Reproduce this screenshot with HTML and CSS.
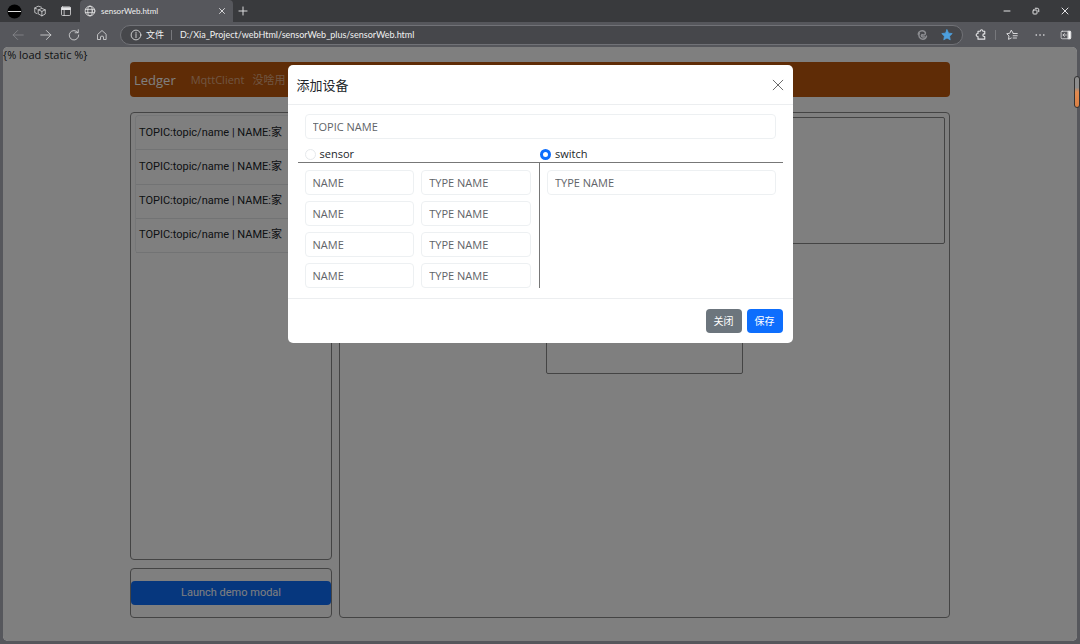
FILE: index.html
```html
<!DOCTYPE html>
<html lang="zh-CN">
<head>
<meta charset="utf-8">
<title>sensorWeb.html</title>
<link rel="stylesheet" href="styles.css">
</head>
<body>
<header class="tabbar">
  <div class="tab-tools">
    <svg class="avatar" viewBox="0 0 16 16"><circle cx="8" cy="8" r="7.5" fill="#000" stroke="none"/><path d="M1.500 8h13" stroke="#ddd" stroke-width="1.200"/></svg>
    <button class="icon-btn" aria-label="Workspaces"><svg viewBox="0 0 16 16"><path d="M6 6.500 10.500 4.500 15 6.500v5.500L10.500 14.500 6 12zM6 6.500l4.500 2 4.500-2M10.500 8.500v6M4 11.500 1 10V4l4.500-2.500L10 3M1 4l3 1.500"/></svg></button>
    <button class="icon-btn" aria-label="Tab actions"><svg viewBox="0 0 16 16"><rect x="2" y="2.500" width="12" height="11.500" rx="1.500"/><path d="M2.500 4h11M2.500 5.500h11" stroke-width="2"/><path d="M5.500 6v8"/></svg></button>
  </div>
  <div class="tab">
    <svg class="glyph" viewBox="0 0 16 16"><circle cx="8" cy="8" r="6.500"/><ellipse cx="8" cy="8" rx="3" ry="6.500"/><path d="M2 5.800h12M2 10.200h12"/></svg>
    <span class="tab-title">sensorWeb.html</span>
    <button class="icon-btn small" aria-label="Close tab"><svg viewBox="0 0 16 16"><path d="m3 3 10 10M13 3 3 13" stroke-width="1.800"/></svg></button>
  </div>
  <button class="icon-btn new-tab" aria-label="New tab"><svg viewBox="0 0 16 16"><path d="M8 1.500v13M1.500 8h13" stroke-width="1.500"/></svg></button>
  <div class="window-tools">
    <button class="icon-btn small" aria-label="Minimize"><svg viewBox="0 0 16 16"><path d="M2 8h12" stroke-width="2"/></svg></button>
    <button class="icon-btn small" aria-label="Restore"><svg viewBox="0 0 16 16"><rect x="2" y="6" width="8" height="8" rx="1.500" stroke-width="2"/><path d="M6.500 2.500h4q3 0 3 3v4" stroke-width="2"/></svg></button>
    <button class="icon-btn small" aria-label="Close window"><svg viewBox="0 0 16 16"><path d="m2 2 12 12M14 2 2 14" stroke-width="2"/></svg></button>
  </div>
</header>
<nav class="toolbar">
  <div class="nav-tools">
    <button class="icon-btn faded" aria-label="Back"><svg viewBox="0 0 16 16"><path d="M15 8H1.500M7.500 2l-6 6 6 6"/></svg></button>
    <button class="icon-btn" aria-label="Forward"><svg viewBox="0 0 16 16"><path d="M1 8h13.500M8.500 2l6 6-6 6"/></svg></button>
    <button class="icon-btn" aria-label="Refresh"><svg viewBox="0 0 16 16"><path d="M13 4.500A6.300 6.300 0 1 0 14.300 8M13.700 1v4H9.500"/></svg></button>
    <button class="icon-btn" aria-label="Home"><svg viewBox="0 0 16 16"><path d="M2.500 7 8 2l5.500 5v7H10v-3.500q0-1-2-1t-2 1V14H2.500z"/></svg></button>
  </div>
  <div class="address">
    <svg class="glyph" viewBox="0 0 16 16"><circle cx="8" cy="8" r="6.500"/><path d="M8 7v4.500M8 4.300v1.400"/></svg>
    <span class="scheme">文件</span>
    <input class="url" aria-label="Address" value="D:/Xia_Project/webHtml/sensorWeb_plus/sensorWeb.html">
    <svg class="glyph swirl" viewBox="0 0 16 16"><path d="M3 7C3 3 8 1 11.500 3.500 14 6 12 8.500 9 8M4.500 5.500C2.500 9 5 13.500 9 13.500c2.500 0 4.500-1.500 5-4M8 7.500c-2 2 0 4 3 3"/></svg>
    <svg class="glyph star" viewBox="0 0 16 16"><path d="m8 1 2.100 4.500 4.900.6-3.600 3.400.9 4.900L8 12l-4.300 2.400.9-4.900L1 6.100l4.900-.6z"/></svg>
  </div>
  <div class="side-tools">
    <button class="icon-btn" aria-label="Extensions"><svg viewBox="0 0 16 16"><path d="M4 3h3q.3-2 1.800-2t1.700 2H13v3.500h-1q-1.500.3-1.500 1.700T12 10h1v3.500H4V10Q1.500 10 1.500 8T4 6z" stroke-width="1.500"/></svg></button>
    <span class="divider"></span>
    <button class="icon-btn favorites" aria-label="Favorites"><svg viewBox="0 0 16 16"><path d="M9.500 5.500 7 1.500 5 5.700 1 6.300l3 3-.7 4.500L7 12M9.500 6H15M9.500 9H15M9.500 12H14" stroke-width="1.200"/></svg></button>
    <button class="icon-btn more" aria-label="More"><svg viewBox="0 0 16 16"><path d="M3 8h.1M8 8h.1M13 8h.1" stroke-width="2.200"/></svg></button>
    <button class="icon-btn" aria-label="Sidebar"><svg viewBox="0 0 16 16"><rect x="1.500" y="3" width="13" height="10" rx="1.500"/><path d="M11 3h3v10h-3z" fill="#fff"/><path d="M8.500 8H4M6 6 4 8l2 2"/></svg></button>
  </div>
</nav>
<main class="viewport">
  <p class="template-tag">{% load static %}</p>
  <div class="container">
    <nav class="navbar">
      <a class="brand" href="#">Ledger</a>
      <a class="nav-link" href="#">MqttClient</a>
      <a class="nav-link" href="#">没啥用</a>
    </nav>
    <div class="layout">
      <aside class="sidebar">
        <div class="panel device-panel">
          <ul class="device-list">
            <li>TOPIC:topic/name | NAME:家</li>
            <li>TOPIC:topic/name | NAME:家</li>
            <li>TOPIC:topic/name | NAME:家</li>
            <li>TOPIC:topic/name | NAME:家</li>
          </ul>
        </div>
        <div class="panel launch-panel"><button class="btn primary launch">Launch demo modal</button></div>
      </aside>
      <section class="panel board">
        <div class="card"></div><div class="card"></div><div class="card"></div>
        <div class="card middle"></div>
      </section>
    </div>
  </div>
  <div class="backdrop">
    <form class="modal" role="dialog" aria-labelledby="modal-title">
      <div class="modal-header">
        <h1 id="modal-title">添加设备</h1>
        <button type="button" class="icon-btn modal-close" aria-label="关闭"><svg viewBox="0 0 16 16"><path d="m2.500 2.500 11 11M13.500 2.500l-11 11"/></svg></button>
      </div>
      <div class="modal-body">
        <div class="topic"><input class="field" placeholder="TOPIC NAME" aria-label="TOPIC NAME"></div>
        <div class="kinds">
          <label class="kind sensor"><input type="radio" name="kind">sensor</label>
          <label class="kind"><input type="radio" name="kind" checked>switch</label>
        </div>
        <div class="columns">
          <div class="sensor-fields">
            <input class="field" placeholder="NAME" aria-label="NAME 1"><input class="field" placeholder="TYPE NAME" aria-label="TYPE NAME 1">
            <input class="field" placeholder="NAME" aria-label="NAME 2"><input class="field" placeholder="TYPE NAME" aria-label="TYPE NAME 2">
            <input class="field" placeholder="NAME" aria-label="NAME 3"><input class="field" placeholder="TYPE NAME" aria-label="TYPE NAME 3">
            <input class="field" placeholder="NAME" aria-label="NAME 4"><input class="field" placeholder="TYPE NAME" aria-label="TYPE NAME 4">
          </div>
          <div class="switch-fields"><input class="field" placeholder="TYPE NAME" aria-label="Switch TYPE NAME"></div>
        </div>
      </div>
      <div class="modal-footer">
        <button type="button" class="btn secondary">关闭</button>
        <button type="button" class="btn primary">保存</button>
      </div>
    </form>
  </div>
</main>
<div class="scroll-thumb"></div>
</body>
</html>
```
FILE: styles.css
```css
* { box-sizing: border-box; }
body {
  margin: 0;
  min-height: 100vh;
  display: flex;
  flex-direction: column;
  background: #56575c;
  color: #212529;
  font: 11px/16px "Open Sans", "Noto Sans CJK SC", sans-serif;
}
button, input { font: inherit; color: inherit; }
svg { display: block; fill: none; stroke: currentColor; stroke-linecap: round; stroke-linejoin: round; }
.icon-btn { width: 12px; height: 12px; padding: 0; border: 0; background: none; color: #e4e4e6; flex: none; }
.icon-btn.small { width: 8px; height: 8px; }
.icon-btn.faded { color: #8b8c90; }
.glyph { width: 12px; height: 12px; flex: none; }

/* Browser frame */
.tabbar { display: flex; align-items: center; height: 22px; background: #393a3d; color: #f1f1f1; }
.tab-tools { display: flex; align-items: center; gap: 14px; width: 80px; padding-left: 7px; }
.avatar { width: 15px; height: 15px; margin-right: -2px; }
.tab { display: flex; align-items: center; gap: 5px; align-self: stretch; width: 153px; padding: 0 7px 0 4px; border-radius: 4px 4px 0 0; background: #56575c; }
.tab-title { flex: 1; font-size: 8px; font-family: Lato, sans-serif; }
.new-tab { width: 10px; height: 10px; margin-left: 5px; }
.window-tools { display: flex; gap: 21px; margin-left: auto; padding-right: 11px; }
.toolbar { display: flex; align-items: center; height: 25px; color: #f1f1f1; }
.nav-tools { display: flex; gap: 16px; width: 120px; padding-left: 12px; }
.address { display: flex; align-items: center; flex: 1; height: 20px; padding: 0 9px; border: 1px solid #717277; border-radius: 10px; background: #46474b; font-size: 9px; }
.scheme { margin-left: 4px; padding-right: 7px; border-right: 1px solid #77787c; line-height: 10px; }
.url { flex: 1; min-width: 0; margin-left: 8px; padding: 0; border: 0; background: none; font-family: Lato, sans-serif; outline: 0; }
.swirl { color: #8c8d91; margin-right: 13px; stroke-width: 2; }
.star { color: #4da0df; fill: currentColor; }
.side-tools { display: flex; align-items: center; width: 117px; padding: 0 8px 0 12px; }
.divider { width: 1px; height: 10px; margin: 0 9px 0 8px; background: #77787c; }
.favorites { margin: 0 16px 0 1px; }
.more { margin-right: 14px; }
.scroll-thumb { position: absolute; top: 76px; right: 0; width: 6px; height: 32px; border: 1px solid #333; border-radius: 3px; background: linear-gradient(#8d8d8d 35%, #e28a50 50%, #d98045); }

/* Page */
.viewport { position: relative; flex: 1; display: flex; flex-direction: column; margin: 0 3px 3px; overflow: hidden; border-radius: 5px; background: #fff; }
.template-tag { margin: 0; height: 15px; }
.container { display: flex; flex-direction: column; flex: 1; gap: 15px; width: 820px; max-width: 100%; margin: 0 auto; padding-bottom: 23px; }
.navbar { display: flex; align-items: center; height: 35px; padding: 0 4px; border-radius: 4px; background: #bf580c; }
.navbar a { text-decoration: none; color: #fff; }
.navbar .brand { margin-right: 15px; font-size: 13px; }
.navbar .nav-link { margin-right: 8px; color: #dfab85; }
.layout { display: grid; grid-template-columns: 202px 1fr; gap: 7px; flex: 1; }
.panel { border: 1px solid #888; border-radius: 4px; }
.sidebar { display: flex; flex-direction: column; gap: 8px; }
.device-panel { flex: 1; padding: 2px 4px; }
.device-list { display: flex; flex-direction: column; height: 138px; margin: 0; padding: 0; list-style: none; border: 1px solid #eceef0; border-width: 1px 1px 0; border-radius: 4px; }
.device-list li { display: flex; align-items: center; flex: 1; padding: 0 3px; border-bottom: 1px solid #e4e6e8; }
.device-list, .launch { font-family: Roboto, "Noto Sans CJK SC", sans-serif; }
.launch-panel { padding: 12px 0; }
.launch-panel .launch { display: block; width: 100%; }
.board { display: grid; grid-template-columns: repeat(3, 1fr); grid-auto-rows: 127px; align-content: start; gap: 3px 4px; padding: 4px; }
.card { border: 1px solid #888; border-radius: 2px; }
.middle { grid-column: 2; }
.btn { height: 24px; padding: 0 8px; border: 0; border-radius: 4px; color: #fff; }
.primary { background: #0d6efd; }
.secondary { background: #6c757d; }

/* Modal */
.backdrop { position: absolute; inset: 0; padding-top: 18px; background: rgba(0, 0, 0, .5); }
.modal { width: 505px; max-width: 100%; margin: 0 auto; border-radius: 5px; background: #fff; }
.modal-header { display: flex; align-items: center; justify-content: space-between; height: 40px; padding: 0 8px 0 9px; border-bottom: 1px solid #eceef0; }
.modal-header h1 { margin: 0; font-size: 13px; font-weight: 400; }
.modal-close { width: 14px; height: 14px; color: #555; }
.modal-body { padding: 9px 10px 10px; }
.topic { padding: 0 7px; }
.field { display: block; width: 100%; min-width: 0; height: 25px; padding: 0 7px; border: 1px solid #edf0f2; border-radius: 4px; background: #fff; }
.field::placeholder { color: #5f6468; opacity: 1; }
.kinds { display: grid; grid-template-columns: 1fr 1fr; padding: 7px 0 0; border-bottom: 1px solid #777; }
.kind { display: flex; align-items: center; gap: 4px; }
.kind.sensor { padding-left: 7px; }
.kind input { appearance: none; width: 11px; height: 11px; margin: 0; border: 1px solid #e6e9ec; border-radius: 50%; background: #fff; }
.kind input:checked { border: 3px solid #0d6efd; }
.columns { display: grid; grid-template-columns: 1fr 1fr; }
.sensor-fields { display: grid; grid-template-columns: 1fr 1fr; gap: 6px 7px; padding: 7px 8px 0 7px; border-right: 1px solid #777; }
.switch-fields { padding: 7px 7px 0; }
.modal-footer { display: flex; justify-content: flex-end; gap: 5px; padding: 10px; border-top: 1px solid #eceef0; font-size: 10px; }
```
